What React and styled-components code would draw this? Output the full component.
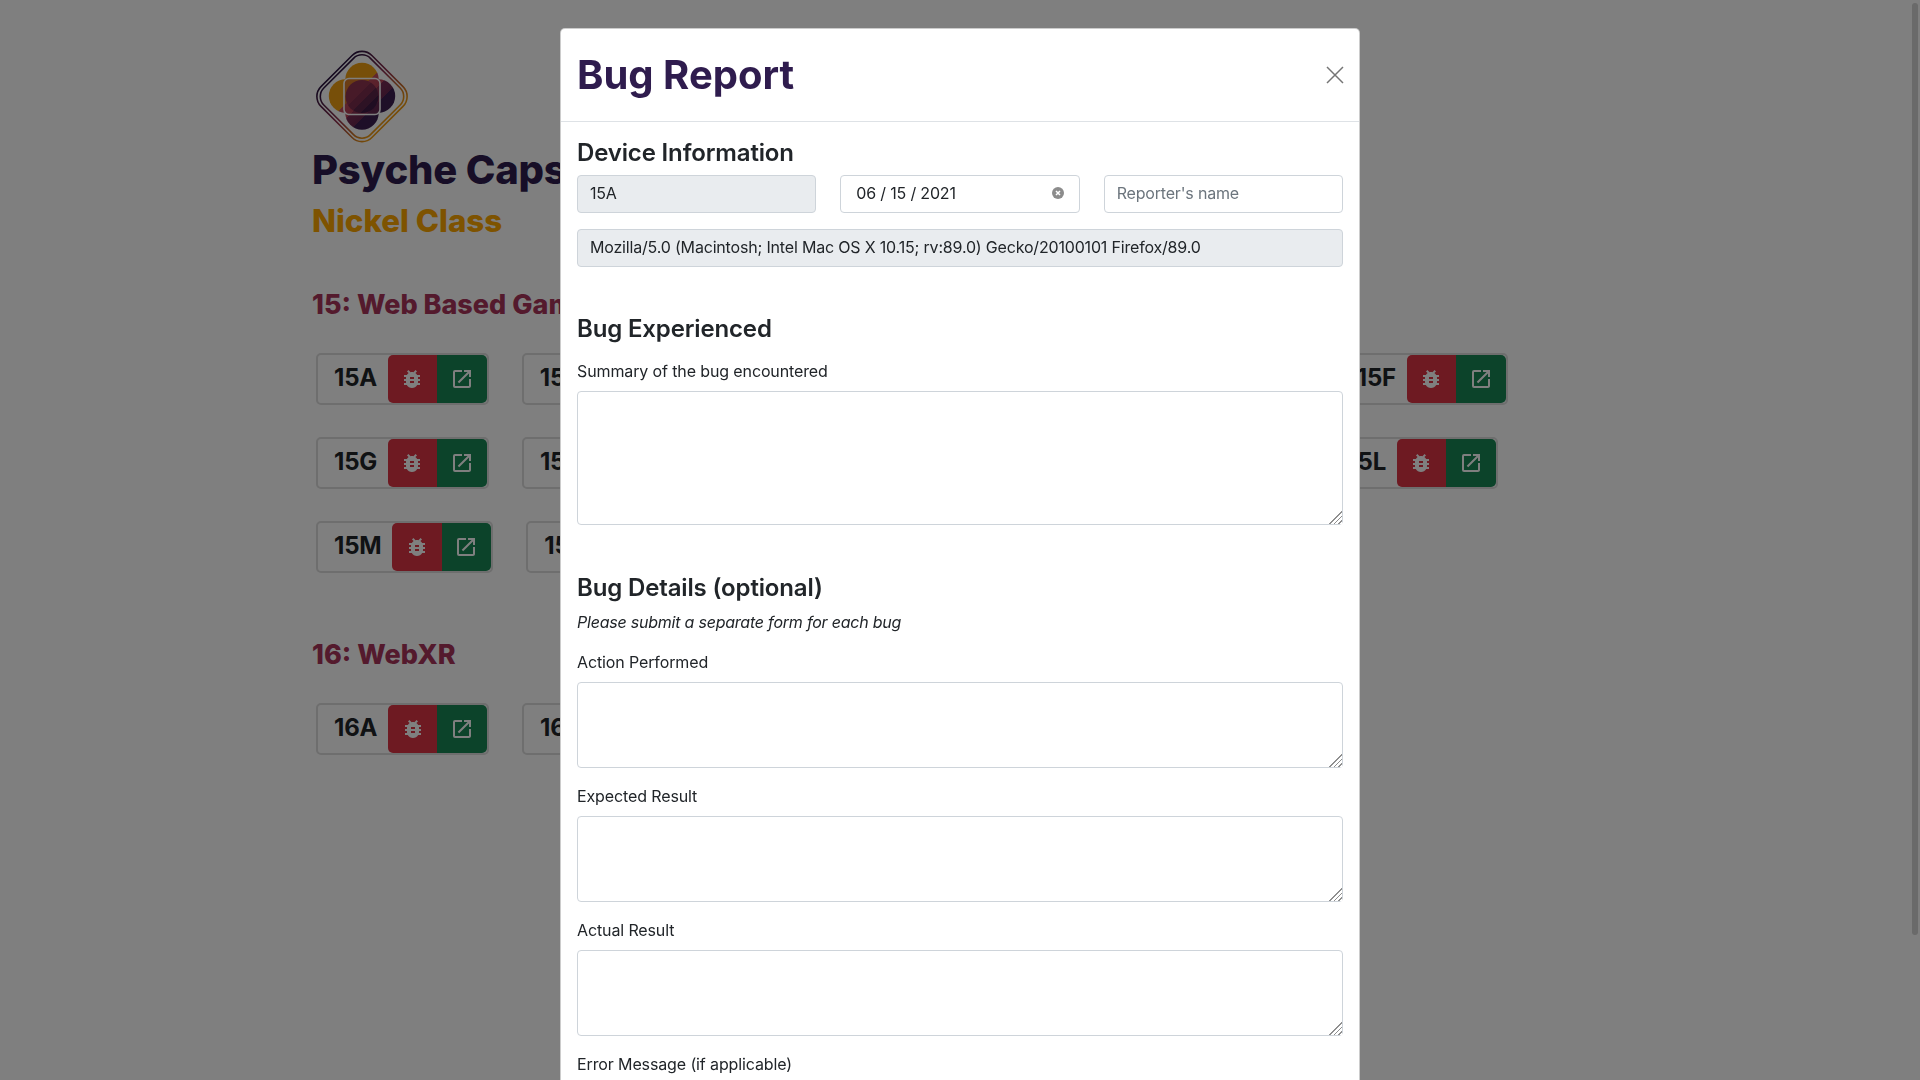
import React from 'react';
import styled, { createGlobalStyle } from 'styled-components';
import { MdBugReport, MdOpenInNew } from 'react-icons/md';

const GlobalStyle = createGlobalStyle`
    * {
        box-sizing: border-box;
    }
    html, body {
        margin: 0;
        height: 100%;
        overflow: hidden;
        background: #fff;
        font-family: "Inter", "Liberation Sans", sans-serif;
        color: #212529;
    }
`;

const Page = styled.main`
    padding: 50px 0 0 312px;
    width: 1520px;
`;

const LogoWrap = styled.div`
    margin-left: 4px;
    width: 92px;
    height: 93px;
`;

const Brand = styled.h1`
    margin: 3px 0 0;
    font-size: 40px;
    line-height: 48px;
    font-weight: 800;
    letter-spacing: -0.2px;
    white-space: nowrap;
    color: #2f1c4e;
`;

const SubBrand = styled.h2`
    margin: 8px 0 0;
    font-size: 31.3px;
    line-height: 38px;
    font-weight: 800;
    color: #fca600;
`;

const SectionTitle = styled.h3`
    margin: ${(p) => p.$top}px 0 0;
    font-size: 27px;
    line-height: 34px;
    font-weight: 800;
    color: #a8345a;
`;

const CardGrid = styled.div`
    display: flex;
    flex-wrap: wrap;
    gap: 32px 33.2px;
    margin: 31px 0 0 4px;
`;

const Card = styled.div`
    display: flex;
    align-items: stretch;
    height: 52px;
    border: 2px solid #dcdcdc;
    border-radius: 5px;
`;

const CardLabel = styled.span`
    display: flex;
    align-items: center;
    padding: 0 10.6px 3px 16px;
    font-size: 24px;
    font-weight: 700;
    letter-spacing: -0.2px;
    color: #212529;
`;

const IconButton = styled.button`
    display: flex;
    align-items: center;
    justify-content: center;
    width: 49.5px;
    padding: 0;
    border: 0;
    color: #fff;
    background: ${(p) => p.$color};
    border-radius: ${(p) => (p.$side === 'left' ? '5px 0 0 5px' : '0 5px 5px 0')};
`;

const Backdrop = styled.div`
    position: fixed;
    inset: 0;
    background: rgba(0, 0, 0, 0.5);
    display: flex;
    justify-content: center;
    align-items: flex-start;
    overflow: hidden;
`;

const Thumb = styled.div`
    position: absolute;
    top: 3px;
    right: 2px;
    width: 6px;
    height: 932px;
    border-radius: 3px;
    background: #6a6a6a;
`;

const Modal = styled.section`
    width: 800px;
    margin-top: 28px;
    background: #fff;
    border: 1px solid rgba(0, 0, 0, 0.2);
    border-radius: 5px;
`;

const ModalHeader = styled.header`
    display: flex;
    align-items: center;
    justify-content: space-between;
    height: 93px;
    padding: 0 15px 0 16px;
    border-bottom: 1px solid #dee2e6;
`;

const ModalTitle = styled.h2`
    margin: 0;
    font-size: 40px;
    line-height: 48px;
    font-weight: 700;
    color: #2f1c4e;
`;

const CloseButton = styled.button`
    display: flex;
    padding: 0;
    border: 0;
    background: none;
    color: #757575;
`;

const ModalBody = styled.div`
    padding: 17px 16px 16px;
`;

const Heading = styled.h4`
    margin: ${(p) => p.$top || 0}px 0 ${(p) => p.$bottom}px;
    font-size: 24px;
    line-height: 28.8px;
    font-weight: 600;
    letter-spacing: -0.15px;
    color: #212529;
`;

const InputRow = styled.div`
    display: grid;
    grid-template-columns: repeat(3, 1fr);
    gap: 24px;
    margin-bottom: 16px;
`;

const Input = styled.input`
    display: block;
    width: 100%;
    height: 38px;
    padding: 5px 12px 7px;
    border: 1px solid #ced4da;
    border-radius: 4px;
    font: 400 16px/24px "Inter", "Liberation Sans", sans-serif;
    letter-spacing: -0.18px;
    color: #212529;
    background: ${(p) => (p.readOnly ? '#e9ecef' : '#fff')};
    outline: none;

    &::placeholder {
        color: #6c757d;
        opacity: 1;
    }
`;

const DateField = styled.div`
    display: flex;
    align-items: center;
    justify-content: space-between;
    height: 38px;
    padding: 0 15px 2px 15px;
    border: 1px solid #ced4da;
    border-radius: 4px;
    font-size: 16px;
    letter-spacing: -0.18px;
    color: #212529;
`;

const Field = styled.div`
    margin-bottom: 16px;
`;

const Label = styled.label`
    display: block;
    margin-bottom: 8px;
    font-size: 16px;
    line-height: 24px;
    letter-spacing: -0.12px;
    color: #212529;
`;

const Note = styled.p`
    margin: 0 0 16px;
    font-size: 16px;
    line-height: 24px;
    font-style: italic;
    letter-spacing: -0.22px;
`;

const TextArea = styled.textarea`
    display: block;
    width: 100%;
    height: ${(p) => p.$height}px;
    border: 1px solid #ced4da;
    border-radius: 4px;
    resize: vertical;
    outline: none;

    &::-webkit-resizer {
        background:
            linear-gradient(135deg, #fff 52%, transparent 52%),
            repeating-linear-gradient(135deg, #8f8f8f 0 1.2px, #fff 1.2px 3px);
    }
`;

const Logo = () => (
    <svg width="92" height="93" viewBox="0 0 92 93">
        <defs>
            <linearGradient id="ring">
                <stop offset="0" stopColor="#2c1440" />
                <stop offset="0.5" stopColor="#8f2f4e" />
                <stop offset="1" stopColor="#ee9a10" />
            </linearGradient>
            <linearGradient id="outer" gradientUnits="userSpaceOnUse" x1="18" y1="18" x2="74" y2="74">
                <stop offset="0.42" stopColor="#ee9f12" />
                <stop offset="0.42" stopColor="#c4505c" />
                <stop offset="0.56" stopColor="#b8465a" />
                <stop offset="0.56" stopColor="#7a2c54" />
                <stop offset="0.7" stopColor="#6a2850" />
                <stop offset="0.7" stopColor="#3c1e50" />
            </linearGradient>
            <linearGradient id="inner" gradientUnits="userSpaceOnUse" x1="18" y1="18" x2="74" y2="74">
                <stop offset="0.46" stopColor="#8f3450" />
                <stop offset="0.46" stopColor="#7a2c4c" />
                <stop offset="0.55" stopColor="#7a2c4c" />
                <stop offset="0.55" stopColor="#5a2448" />
                <stop offset="0.64" stopColor="#5a2448" />
                <stop offset="0.64" stopColor="#3e1a44" />
            </linearGradient>
        </defs>
        <rect x="10" y="10.5" width="72" height="72" rx="14" fill="none" stroke="url(#ring)" strokeWidth="1.6" transform="rotate(45 46 46.5)" />
        <rect x="13" y="13.5" width="66" height="66" rx="12" fill="none" stroke="url(#ring)" strokeWidth="1.6" transform="rotate(45 46 46.5)" />
        <circle cx="46" cy="29.5" r="16.7" fill="url(#outer)" />
        <circle cx="29.5" cy="46" r="16.7" fill="url(#outer)" />
        <circle cx="62.5" cy="46" r="16.7" fill="url(#outer)" />
        <circle cx="46" cy="63" r="16.7" fill="url(#outer)" />
        <rect x="28" y="28.5" width="36" height="36" rx="5" fill="#a83a52" fillOpacity="0.35" stroke="#fff" strokeWidth="1.6" />
        <circle cx="46" cy="46.5" r="16.5" fill="url(#inner)" />
    </svg>
);

const ProjectCard = ({ label }) => (
    <Card>
        <CardLabel>{label}</CardLabel>
        <IconButton $color="#dc3545" $side="left" aria-label="Report bug">
            <MdBugReport size={24} />
        </IconButton>
        <IconButton $color="#198754" $side="right" aria-label="Open">
            <MdOpenInNew size={24} />
        </IconButton>
    </Card>
);

const webGames = ['15A', '15B', '15C', '15D', '15E', '15F', '15G', '15H', '15I', '15J', '15K', '15L', '15M', '15N', '15O', '15P'];
const webXr = ['16A', '16B', '16C', '16D'];

const Close = () => (
    <svg width="18" height="18" viewBox="0 0 18 18">
        <path d="M1 1l16 16M17 1L1 17" stroke="currentColor" strokeWidth="1.5" fill="none" />
    </svg>
);

const ClearIcon = () => (
    <svg width="12" height="12" viewBox="0 0 12 12">
        <circle cx="6" cy="6" r="6" fill="#8c8c8c" />
        <path d="M4 4l4 4M8 4l-4 4" stroke="#fff" strokeWidth="1.5" />
    </svg>
);

const ua = 'Mozilla/5.0 (Macintosh; Intel Mac OS X 10.15; rv:89.0) Gecko/20100101 Firefox/89.0';

export default function App() {
    return (
        <>
            <GlobalStyle />
            <Page>
                <LogoWrap>
                    <Logo />
                </LogoWrap>
                <Brand>Psyche Capsule</Brand>
                <SubBrand>Nickel Class</SubBrand>
                <SectionTitle $top={48}>15: Web Based Games</SectionTitle>
                <CardGrid>
                    {webGames.map((label) => <ProjectCard key={label} label={label} />)}
                </CardGrid>
                <SectionTitle $top={65}>16: WebXR</SectionTitle>
                <CardGrid>
                    {webXr.map((label) => <ProjectCard key={label} label={label} />)}
                </CardGrid>
            </Page>
            <Backdrop>
                <Modal>
                    <ModalHeader>
                        <ModalTitle>Bug Report</ModalTitle>
                        <CloseButton aria-label="Close"><Close /></CloseButton>
                    </ModalHeader>
                    <ModalBody>
                        <Heading $bottom={7}>Device Information</Heading>
                        <InputRow>
                            <Input readOnly value="15A" />
                            <DateField>
                                <span>06 / 15 / 2021</span>
                                <ClearIcon />
                            </DateField>
                            <Input placeholder="Reporter's name" />
                        </InputRow>
                        <Input readOnly value={ua} />

                        <Heading $top={48} $bottom={15}>Bug Experienced</Heading>
                        <Field>
                            <Label>Summary of the bug encountered</Label>
                            <TextArea $height={134} />
                        </Field>

                        <Heading $top={49} $bottom={8}>Bug Details (optional)</Heading>
                        <Note>Please submit a separate form for each bug</Note>
                        <Field>
                            <Label>Action Performed</Label>
                            <TextArea $height={86} />
                        </Field>
                        <Field>
                            <Label>Expected Result</Label>
                            <TextArea $height={86} />
                        </Field>
                        <Field>
                            <Label>Actual Result</Label>
                            <TextArea $height={86} />
                        </Field>
                        <Field>
                            <Label>Error Message (if applicable)</Label>
                            <TextArea $height={86} />
                        </Field>
                    </ModalBody>
                </Modal>
                <Thumb />
            </Backdrop>
        </>
    );
}
